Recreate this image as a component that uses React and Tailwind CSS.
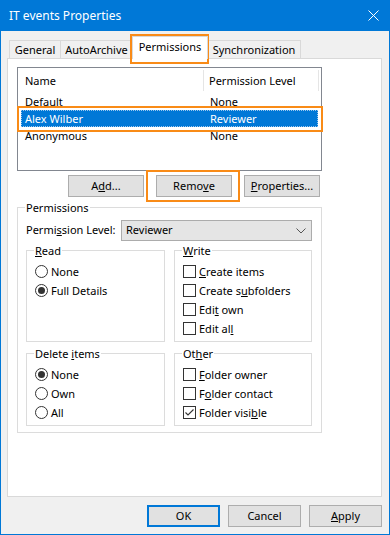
import React from 'react';

const ORANGE = 'border-[#f98b17]';

function Radio({ checked }) {
  return (
    <span className="w-[13px] h-[13px] rounded-full border border-[#333333] bg-white flex items-center justify-center shrink-0">
      {checked && <span className="w-[7px] h-[7px] rounded-full bg-[#333333]" />}
    </span>
  );
}

function Check({ checked }) {
  return (
    <span className="w-[13px] h-[13px] border border-[#333333] bg-white flex items-center justify-center shrink-0">
      {checked && (
        <svg width="11" height="11" viewBox="0 0 11 11">
          <polyline points="1.5,5.5 4,8 9.5,2.5" fill="none" stroke="#333333" strokeWidth="1.1" />
        </svg>
      )}
    </span>
  );
}

function Item({ control, children }) {
  return (
    <div className="h-[19px] flex items-center gap-[3px] pl-[8px]">
      {control}
      <span className="leading-[19px]">{children}</span>
    </div>
  );
}

function Group({ label, className = '', children }) {
  return (
    <fieldset className={`border border-[#dcdcdc] ${className}`}>
      <legend className="ml-[7px] px-[1px] leading-[15px]">{label}</legend>
      {children}
    </fieldset>
  );
}

function Btn({ children, className = '' }) {
  return (
    <div className={`h-[22px] flex items-center justify-center pt-[1px] bg-[#e1e1e1] ${className}`}>
      {children}
    </div>
  );
}

export default function App() {
  return (
    <div className="relative w-[390px] h-[535px] flex flex-col font-['Noto_Sans',sans-serif] text-[11px] text-black select-none">
      {/* Title bar */}
      <div className="h-[31px] shrink-0 bg-[#0078d7] flex items-center justify-between pl-[9px] pr-[11px] text-white text-[12px]">
        <span className="pt-[1px]">IT events Properties</span>
        <svg width="11" height="11" viewBox="0 0 11 11">
          <path d="M0.5 0.5 L10.5 10.5 M10.5 0.5 L0.5 10.5" stroke="white" strokeWidth="1" />
        </svg>
      </div>

      <div className="flex-1 bg-[#f0f0f0] border-x border-b border-[#0078d7] pt-[5px]">
        {/* Tabs */}
        <div className="ml-[6px] pl-[2px] h-[22px] flex items-end">
          <div className="w-[52px] h-[18px] border border-b-0 border-[#d9d9d9] bg-[#f0f0f0] flex items-center justify-center pt-[2px]">General</div>
          <div className="-ml-px w-[73px] h-[18px] border border-b-0 border-[#d9d9d9] bg-[#f0f0f0] flex items-center justify-center pt-[2px]">AutoArchive</div>
          <div className="-ml-px relative z-10 -mb-px w-[76px] h-[23px] border border-b-0 border-[#d9d9d9] bg-white flex items-center justify-center pb-[1px]">Permissions</div>
          <div className="-ml-px w-[94px] h-[18px] border border-b-0 border-[#d9d9d9] bg-[#f0f0f0] flex items-center justify-center pt-[2px]">Synchronization</div>
        </div>

        {/* Tab panel */}
        <div className="ml-[6px] w-[375px] h-[439px] border border-[#d9d9d9] bg-white pt-[8px] pl-[9px]">
          {/* List */}
          <div className="w-[305px] h-[104px] border border-[#828790] bg-white">
            <div className="h-[25px] flex">
              <div className="w-[186px] border-r border-[#e5e5e5] my-[2px] pl-[7px] pt-[2px] flex items-center">Name</div>
              <div className="w-[115px] border-r border-[#e5e5e5] my-[2px] pl-[5px] pt-[2px] flex items-center">Permission Level</div>
            </div>
            <div className="h-[17px] flex items-center pl-[7px] pt-[1px]">
              <span className="w-[185px]">Default</span>
              <span>None</span>
            </div>
            <div className="h-[17px] ml-[3px] w-[297px] flex items-center pl-[4px] pt-[1px] bg-[#0078d7] text-white outline-1 outline-dotted outline-[#9cc8ee] -outline-offset-1">
              <span className="w-[185px]">Alex Wilber</span>
              <span>Reviewer</span>
            </div>
            <div className="h-[17px] flex items-center pl-[7px] pt-[1px]">
              <span className="w-[185px]">Anonymous</span>
              <span>None</span>
            </div>
          </div>

          {/* Buttons */}
          <div className="w-[305px] mt-[4px] pr-[2px] flex justify-end gap-[12px]">
            <Btn className="w-[76px] border border-[#adadad]">A<u>d</u>d...</Btn>
            <Btn className="w-[76px] border border-[#adadad]">Remo<u>v</u>e</Btn>
            <Btn className="w-[76px] border border-[#adadad]"><u>P</u>roperties...</Btn>
          </div>

          {/* Permissions group */}
          <Group label="Permissions" className="w-[305px] mt-[3px] pb-[6px]">
            <div className="mt-[5px] pl-[8px] flex items-center">
              <span className="w-[95px]">Permi<u>s</u>sion Level:</span>
              <div className="w-[191px] h-[21px] border border-[#acacac] bg-[#e5e5e5] flex items-center justify-between pl-[4px] pr-[5px]">
                <span>Reviewer</span>
                <svg width="10" height="6" viewBox="0 0 10 6">
                  <polyline points="0.5,0.5 5,5 9.5,0.5" fill="none" stroke="#555555" strokeWidth="1" />
                </svg>
              </div>
            </div>

            <div className="mt-[2px] pl-[8px] flex gap-[9px]">
              <Group label={<><u>R</u>ead</>} className="w-[139px] pt-[4px]">
                <Item control={<Radio />}>None</Item>
                <Item control={<Radio checked />}>Full Details</Item>
              </Group>
              <Group label={<><u>W</u>rite</>} className="w-[138px] pt-[4px] pb-[3px]">
                <Item control={<Check />}><u>C</u>reate items</Item>
                <Item control={<Check />}>Create s<u>u</u>bfolders</Item>
                <Item control={<Check />}>Edi<u>t</u> own</Item>
                <Item control={<Check />}>Edit al<u>l</u></Item>
              </Group>
            </div>

            <div className="mt-[4px] pl-[8px] flex gap-[9px]">
              <Group label={<>Delete <u>i</u>tems</>} className="w-[139px] pt-[4px] pb-[3px]">
                <Item control={<Radio checked />}>None</Item>
                <Item control={<Radio />}>Own</Item>
                <Item control={<Radio />}>All</Item>
              </Group>
              <Group label={<>Ot<u>h</u>er</>} className="w-[138px] pt-[4px] pb-[3px]">
                <Item control={<Check />}><u>F</u>older owner</Item>
                <Item control={<Check />}>F<u>o</u>lder contact</Item>
                <Item control={<Check checked />}>Folder visi<u>b</u>le</Item>
              </Group>
            </div>
          </Group>
        </div>

        {/* Dialog buttons */}
        <div className="ml-[6px] w-[375px] mt-[8px] flex justify-end gap-[8px]">
          <Btn className="w-[73px] border-2 border-[#0078d7]">OK</Btn>
          <Btn className="w-[73px] border border-[#adadad]">Cancel</Btn>
          <Btn className="w-[73px] border border-[#adadad]"><u>A</u>pply</Btn>
        </div>
      </div>

      {/* Highlight overlays */}
      <div className={`absolute left-[130px] top-[34px] w-[79px] h-[30px] border-2 ${ORANGE} pointer-events-none`} />
      <div className={`absolute left-[17px] top-[106px] w-[306px] h-[26px] border-2 ${ORANGE} pointer-events-none`} />
      <div className={`absolute left-[146px] top-[170px] w-[94px] h-[32px] border-2 ${ORANGE} pointer-events-none`} />
    </div>
  );
}
